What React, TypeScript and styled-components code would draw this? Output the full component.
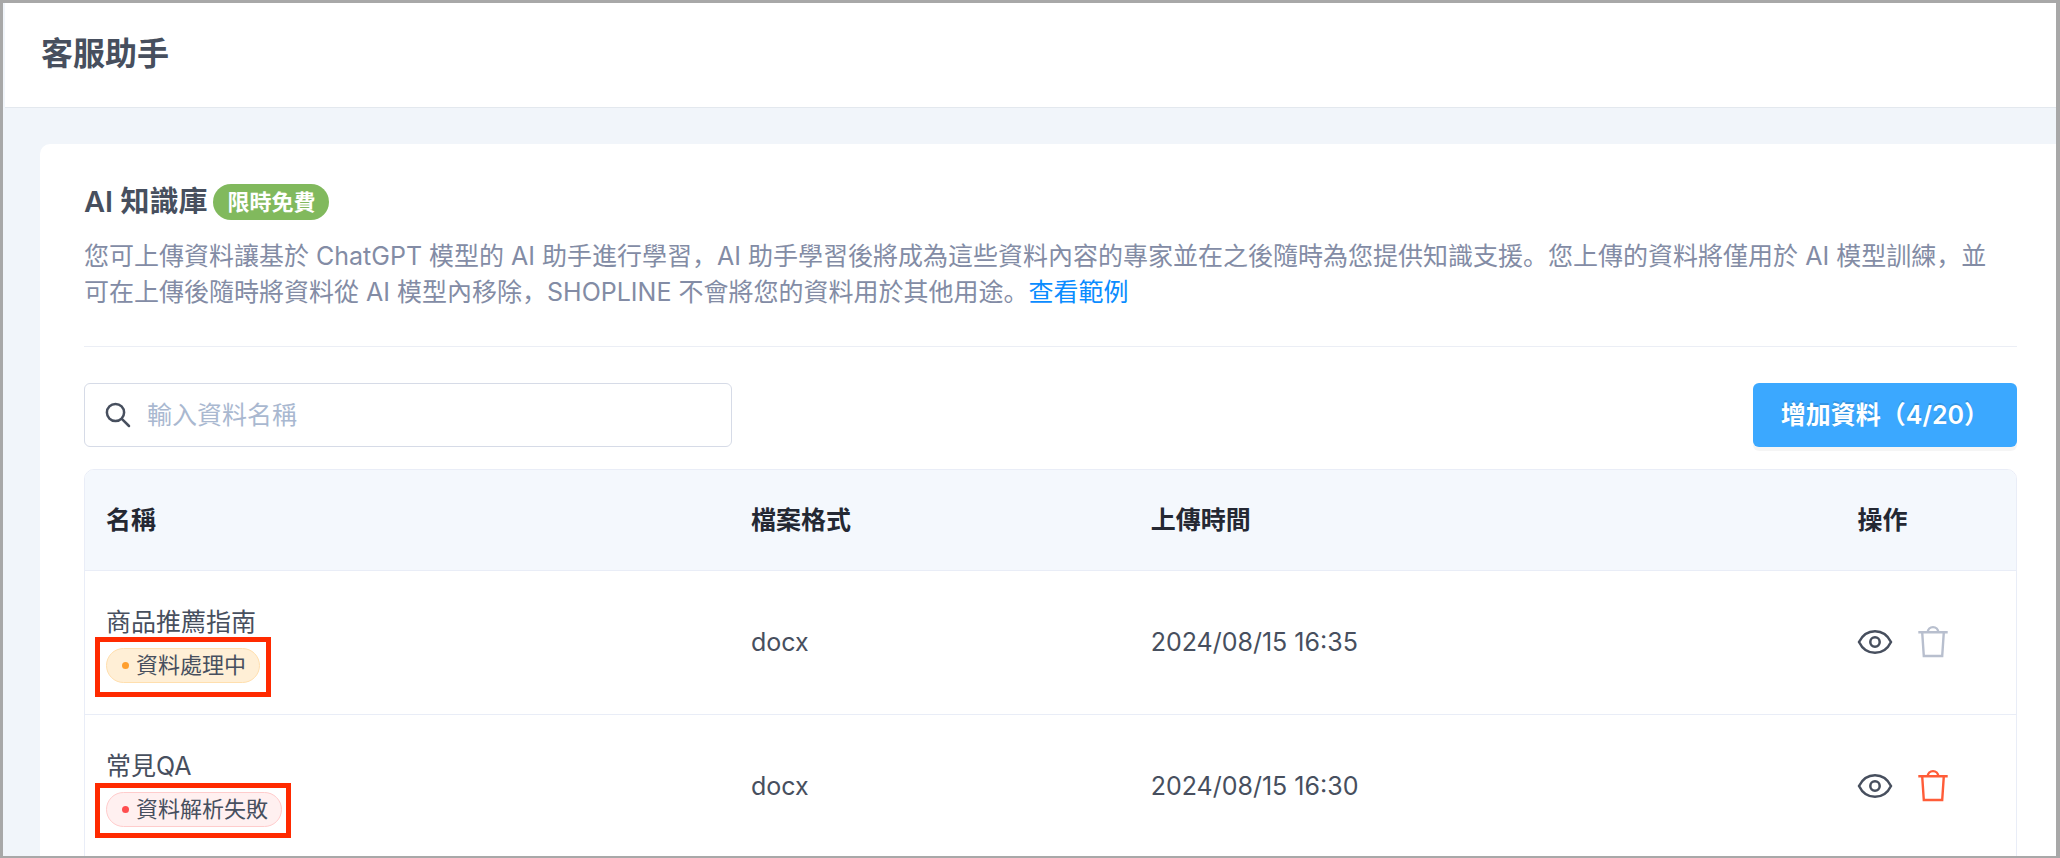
import React from 'react';
import styled, { createGlobalStyle } from 'styled-components';

const GlobalStyle = createGlobalStyle`
  *, *::before, *::after { box-sizing: border-box; }
  body {
    margin: 0;
    color: #474f5e;
    background: #f1f5fa;
    font-family: Inter, "Noto Sans CJK SC", sans-serif;
    font-size: 25px;
    line-height: 36px;
  }
  button, input { font: inherit; color: inherit; }
`;

const Frame = styled.div`
  display: flex;
  flex-direction: column;
  height: 100vh;
  overflow: hidden;
  border: solid #a8a8a8;
  border-width: 3px 4px 2px 3px;
  padding-left: 2px;
  background: #f1f5fa;
`;

const Header = styled.header`
  flex: none;
  padding: 27px 36px 29px;
  background: #fff;
  border-bottom: 1px solid #e3e8ee;
`;

const PageTitle = styled.h1`
  margin: 0;
  font-size: 32px;
  line-height: 48px;
  font-weight: 600;
`;

const Main = styled.main`
  flex: 1;
  padding: 36px 0 0 35px;
`;

const Card = styled.section`
  min-height: 100%;
  padding: 38px 39px 0 44px;
  background: #fff;
  border-radius: 10px 0 0 0;
`;

const CardHeader = styled.div`
  display: flex;
  align-items: center;
  gap: 6px;
`;

const CardTitle = styled.h2`
  margin: 0;
  font-size: 29px;
  line-height: 40px;
  font-weight: 600;
`;

const Badge = styled.span`
  padding: 0 14px;
  border-radius: 18px;
  background: #81b95d;
  color: #fff;
  font-size: 22px;
  font-weight: 700;
`;

const Description = styled.p`
  margin: 16px 0 0;
  padding: 0 20px 36px 0;
  border-bottom: 1px solid #ebeef5;
  color: #838ca5;
`;

const ExampleLink = styled.a`
  color: #0a8cff;
  text-decoration: none;
`;

const Toolbar = styled.div`
  display: flex;
  justify-content: space-between;
  margin: 36px 0 22px;
`;

const SearchField = styled.label`
  display: flex;
  align-items: center;
  gap: 12px;
  width: 648px;
  height: 64px;
  padding: 0 18px;
  border: 1px solid #d6dbe7;
  border-radius: 6px;
`;

const SearchInput = styled.input`
  flex: 1;
  min-width: 0;
  padding: 0;
  border: 0;
  outline: 0;
  background: transparent;
  &::placeholder { color: #a9b8d0; opacity: 1; }
`;

const AddButton = styled.button`
  height: 64px;
  padding: 0 28px;
  border: 0;
  border-radius: 6px;
  background: #3ba8ff;
  color: #fff;
  font-weight: 600;
  text-shadow: 0 -2px 0 rgba(0, 0, 0, 0.12);
  box-shadow: 0 4px 0 rgba(0, 0, 0, 0.04);
`;

const TableBox = styled.div`
  border: 1px solid #e9edf7;
  border-radius: 10px 10px 0 0;
  overflow: hidden;
`;

const Table = styled.table`
  width: 100%;
  table-layout: fixed;
  border-collapse: collapse;
`;

const Column = styled.col<{ $share: number }>`
  width: ${({ $share }) => $share}%;
`;

const HeadCell = styled.th`
  height: 100px;
  padding: 0 21px;
  border-bottom: 1px solid #e9edf7;
  background: #f4f8fd;
  color: #242833;
  font-weight: 600;
  text-align: left;
`;

const Cell = styled.td`
  height: 144px;
  padding: 0 21px;
  border-bottom: 1px solid #e9edf7;
`;

const FileName = styled.div`
  padding: 2px 0 8px;
`;

type Tone = 'processing' | 'failed';

const tones = {
  processing: { fill: '#ffefd6', line: '#ffdfae', dot: '#ff9f2e' },
  failed: { fill: '#fff0f0', line: '#ffcccc', dot: '#ff4d4f' },
};

const Status = styled.div<{ $tone: Tone }>`
  position: relative;
  display: flex;
  align-items: center;
  gap: 7px;
  width: fit-content;
  height: 35px;
  padding: 0 13px 0 15px;
  border: 1px solid ${({ $tone }) => tones[$tone].line};
  border-radius: 18px;
  background: ${({ $tone }) => tones[$tone].fill};
  font-size: 22px;
  &::before {
    content: '';
    width: 7px;
    height: 7px;
    border-radius: 50%;
    background: ${({ $tone }) => tones[$tone].dot};
  }
`;

const Highlight = styled.span<{ $inset: string }>`
  position: absolute;
  inset: ${({ $inset }) => $inset};
  border: 5px solid #ff2a00;
`;

const Actions = styled.div`
  display: flex;
  gap: 22px;
`;

const IconButton = styled.button<{ $color: string }>`
  display: flex;
  padding: 0;
  border: 0;
  background: none;
  color: ${({ $color }) => $color};
`;

const Icon = styled.svg`
  display: block;
  flex: none;
  fill: none;
  stroke: currentColor;
`;

const SearchIcon = () => (
  <Icon width="32" height="32" viewBox="0 0 32 32" strokeWidth="2.5" strokeLinecap="round" color="#474f5e" aria-hidden="true">
    <circle cx="12.5" cy="13.5" r="8.6" />
    <path d="M18.800 19.800 26 27" />
  </Icon>
);

const EyeIcon = () => (
  <Icon width="36" height="36" viewBox="0 0 36 36" strokeWidth="2.5" aria-hidden="true">
    <path d="M2 18C5.500 10.800 11 7.200 18 7.200s12.500 3.600 16 10.800c-3.500 7.200-9 10.800-16 10.800S5.500 25.200 2 18z" />
    <circle cx="18" cy="18" r="4.7" />
  </Icon>
);

const TrashIcon = () => (
  <Icon width="36" height="36" viewBox="0 0 36 36" strokeWidth="2.4" aria-hidden="true">
    <path d="M3.300 8.300h29.400M7.200 8.300l1.600 23.700h18.400l1.600-23.700M12.800 8.300a5.200 5.200 0 0 1 10.400 0" />
  </Icon>
);

const files: { name: string; tone: Tone; status: string; inset: string; format: string; time: string; canDelete: boolean }[] = [
  { name: '商品推薦指南', tone: 'processing', status: '資料處理中', inset: '-12px -12px -15px', format: 'docx', time: '2024/08/15 16:35', canDelete: false },
  { name: '常見QA', tone: 'failed', status: '資料解析失敗', inset: '-10px -10px -12px -12px', format: 'docx', time: '2024/08/15 16:30', canDelete: true },
];

export default function App() {
  return (
    <Frame lang="zh-Hans">
      <GlobalStyle />
      <Header>
        <PageTitle>客服助手</PageTitle>
      </Header>
      <Main>
        <Card>
          <CardHeader>
            <CardTitle>AI 知識庫</CardTitle>
            <Badge>限時免費</Badge>
          </CardHeader>
          <Description>
            您可上傳資料讓基於 ChatGPT 模型的 AI 助手進行學習，AI 助手學習後將成為這些資料內容的專家並在之後隨時為您提供知識支援。您上傳的資料將僅用於 AI 模型訓練，並可在上傳後隨時將資料從 AI 模型內移除，SHOPLINE 不會將您的資料用於其他用途。<ExampleLink href="#example">查看範例</ExampleLink>
          </Description>
          <Toolbar>
            <SearchField>
              <SearchIcon />
              <SearchInput type="text" placeholder="輸入資料名稱" aria-label="輸入資料名稱" />
            </SearchField>
            <AddButton type="button">增加資料（4/20）</AddButton>
          </Toolbar>
          <TableBox>
            <Table>
              <colgroup>
                <Column $share={33.4} />
                <Column $share={20.7} />
                <Column $share={36.6} />
                <Column $share={9.3} />
              </colgroup>
              <thead>
                <tr>
                  <HeadCell>名稱</HeadCell>
                  <HeadCell>檔案格式</HeadCell>
                  <HeadCell>上傳時間</HeadCell>
                  <HeadCell>操作</HeadCell>
                </tr>
              </thead>
              <tbody>
                {files.map((file) => (
                  <tr key={file.name}>
                    <Cell>
                      <FileName>{file.name}</FileName>
                      <Status $tone={file.tone}>
                        {file.status}
                        <Highlight $inset={file.inset} />
                      </Status>
                    </Cell>
                    <Cell>{file.format}</Cell>
                    <Cell>{file.time}</Cell>
                    <Cell>
                      <Actions>
                        <IconButton type="button" aria-label="查看" $color="#474f5e"><EyeIcon /></IconButton>
                        <IconButton type="button" aria-label="刪除" disabled={!file.canDelete} $color={file.canDelete ? '#ff5c38' : '#b8bfce'}><TrashIcon /></IconButton>
                      </Actions>
                    </Cell>
                  </tr>
                ))}
              </tbody>
            </Table>
          </TableBox>
        </Card>
      </Main>
    </Frame>
  );
}
